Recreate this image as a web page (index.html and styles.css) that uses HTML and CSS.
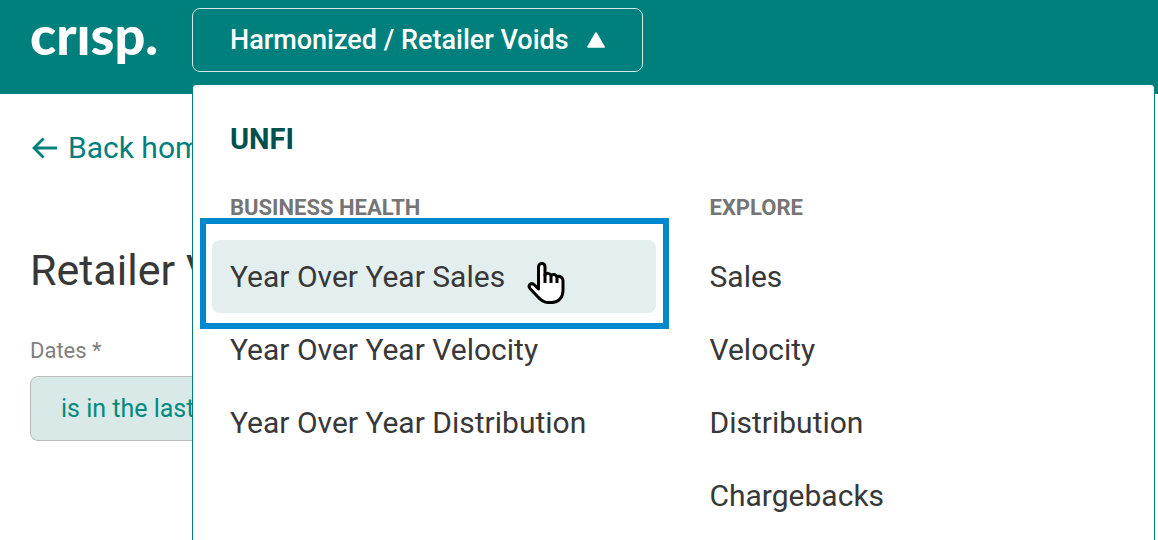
FILE: index.html
```html
<!DOCTYPE html>
<html lang="en">
<head>
  <meta charset="UTF-8">
  <meta name="viewport" content="width=device-width, initial-scale=1.0">
  <title>Retailer Voids</title>
  <link rel="stylesheet" href="styles.css">
</head>
<body>
  <div class="app">
    <!-- Header -->
    <header class="header">
      <a class="logo" href="#">crısp.</a>
      <button class="switcher" type="button" aria-expanded="true">
        Harmonized / Retailer Voids
        <svg class="caret" viewBox="0 0 18 16" aria-hidden="true">
          <path d="M9 1.2 L16.8 14.8 H1.2 Z" fill="#fff" stroke="#fff" stroke-width="2" stroke-linejoin="round"/>
        </svg>
      </button>
    </header>

    <!-- Page content -->
    <main class="content">
      <a class="back" href="#">
        <svg class="back-icon" viewBox="0 0 28 22" aria-hidden="true">
          <path d="M27 11 H4 M13.500 1.500 L4 11 L13.500 20.500" fill="none" stroke="currentColor" stroke-width="2.800"/>
        </svg>
        Back home
      </a>
      <h1>Retailer Voids</h1>
      <label class="field-label" for="dates">Dates *</label>
      <select class="field" id="dates">
        <option>is in the last</option>
      </select>
    </main>

    <!-- Dashboard menu -->
    <nav class="menu">
      <h2>UNFI</h2>
      <div class="columns">
        <section>
          <h3>BUSINESS HEALTH</h3>
          <ul>
            <li class="marked">
              <a class="item active" href="#">Year Over Year Sales</a>
              <svg class="pointer" viewBox="0 0 38 44" aria-hidden="true">
                <path d="M11.500 28 V6 C11.500 1.200 18 1.200 18 6 V14 C19.500 11.500 23 12 24 14.500 C26 12.500 29 13.500 30 16 C32.500 14.500 36 16 36 20 V29 C36 37 31 41.500 25 41.500 H21 C16 41.500 13.500 39 10.500 35.500 L3 27.500 C0.500 24 4.500 21 7.500 24 Z" fill="#fff" stroke="#000" stroke-width="3" stroke-linejoin="round"/>
                <path d="M18 13 V22 M24 14.500 V22 M30 16 V22" fill="none" stroke="#000" stroke-width="3"/>
              </svg>
            </li>
            <li><a class="item" href="#">Year Over Year Velocity</a></li>
            <li><a class="item" href="#">Year Over Year Distribution</a></li>
          </ul>
        </section>
        <section>
          <h3>EXPLORE</h3>
          <ul>
            <li><a class="item" href="#">Sales</a></li>
            <li><a class="item" href="#">Velocity</a></li>
            <li><a class="item" href="#">Distribution</a></li>
            <li><a class="item" href="#">Chargebacks</a></li>
          </ul>
        </section>
      </div>
    </nav>
  </div>
</body>
</html>
```
FILE: styles.css
```css
* {
  margin: 0;
  padding: 0;
  box-sizing: border-box;
}

body {
  font-family: Roboto, "Liberation Sans", sans-serif;
  color: #383838;
  background: #fff;
}

a {
  text-decoration: none;
}

ul {
  list-style: none;
}

.app {
  position: relative;
  height: 100vh;
  overflow: hidden;
}

/* Header */
.header {
  display: flex;
  align-items: flex-start;
  padding: 8px 30px 22px;
  background: #00807d;
}

.logo {
  width: 162px;
  font-family: Lato, sans-serif;
  font-size: 54px;
  font-weight: 900;
  line-height: 54px;
  color: #fff;
}

.switcher {
  display: flex;
  align-items: center;
  gap: 18px;
  height: 64px;
  padding: 0 37px;
  border: 1px solid #d5ebe9;
  border-radius: 8px;
  background: transparent;
  font-family: inherit;
  font-size: 27px;
  font-weight: 500;
  color: #fff;
}

.caret {
  width: 18px;
  height: 16px;
}

/* Page content */
.content {
  display: flex;
  flex-direction: column;
  align-items: flex-start;
  padding: 34px 30px;
}

.back {
  display: flex;
  align-items: center;
  gap: 10px;
  font-size: 30px;
  line-height: 40px;
  color: #00807d;
}

.back-icon {
  width: 28px;
  height: 22px;
}

h1 {
  margin-top: 72px;
  font-size: 43px;
  font-weight: 400;
  line-height: 60px;
}

.field-label {
  margin-top: 37px;
  font-size: 22px;
  line-height: 28px;
  color: #808080;
}

.field {
  width: 320px;
  height: 65px;
  margin-top: 11px;
  padding: 0 30px;
  border: 1px solid #b9bdbc;
  border-radius: 8px;
  background: #d8e9e7;
  appearance: none;
  font-family: inherit;
  font-size: 25px;
  color: #008a80;
}

/* Dropdown menu, lies over the page */
.menu {
  position: absolute;
  top: 85px;
  right: 3px;
  bottom: 0;
  left: 192px;
  padding: 34px 19px;
  border: solid #00807d;
  border-width: 0 1px;
  border-radius: 4px 4px 0 0;
  background: #fff;
}

h2 {
  padding: 0 18px;
  font-size: 29px;
  font-weight: 700;
  line-height: 40px;
  color: #00504f;
}

.columns {
  display: grid;
  grid-template-columns: 1fr 1fr;
  gap: 36px;
  margin-top: 35px;
}

h3 {
  padding: 0 18px;
  font-size: 22px;
  font-weight: 700;
  line-height: 28px;
  color: #757575;
}

.columns ul {
  margin-top: 18px;
}

.item {
  display: block;
  padding: 0 18px;
  border-radius: 8px;
  font-size: 30px;
  line-height: 73px;
  color: #383838;
}

.item.active {
  background: #e3eeee;
}

/* Highlight frame around the hovered item */
.marked {
  position: relative;
}

.marked::after {
  content: "";
  position: absolute;
  inset: -22px -13px -16px -12px;
  border: 6px solid #0088cf;
}

.pointer {
  position: absolute;
  top: 21px;
  left: 315px;
  width: 38px;
  height: 44px;
}
```
